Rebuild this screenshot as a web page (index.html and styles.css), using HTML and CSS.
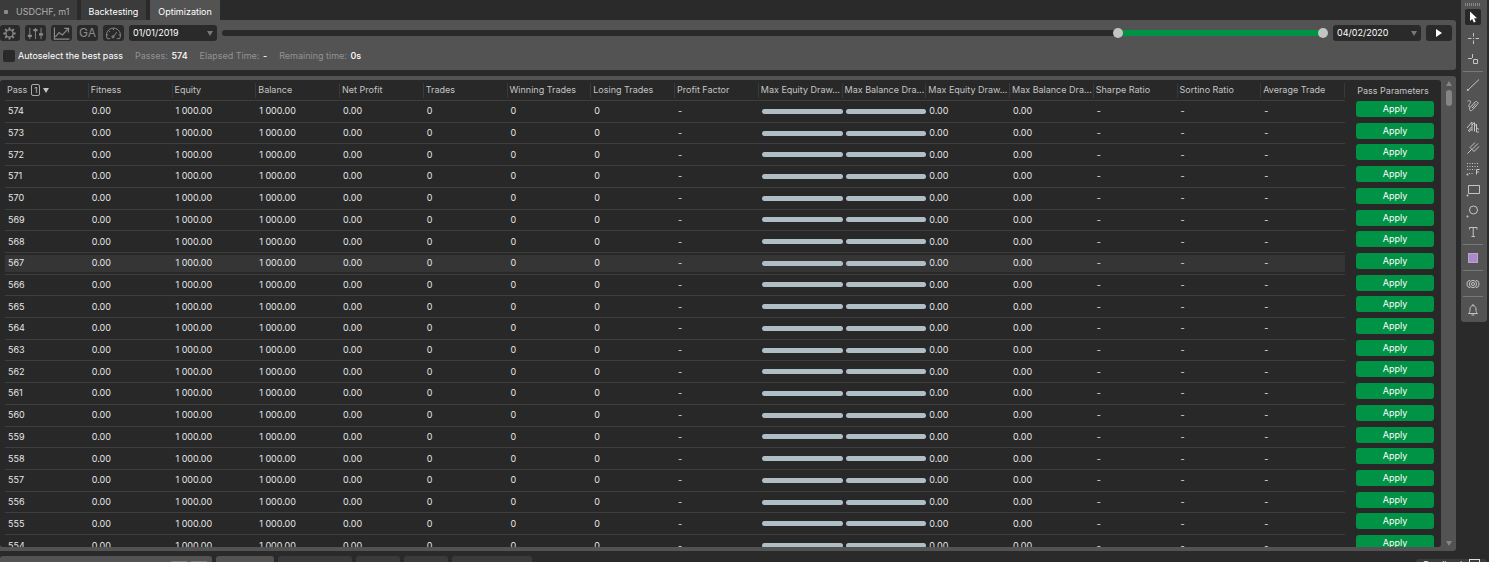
FILE: index.html
```
<!DOCTYPE html>
<html lang="en">
  <head>
    <meta charset="utf-8">
    <title>Optimization</title>
    <link rel="stylesheet" href="styles.css">
    <script>
      const FIRST_PASS = 574;
      const LAST_PASS = 554;
      const HOVERED_PASS = 567;
      const BAR = '<div class="bar"></div>';

      // one entry per column, after the pass number
      const values = [
        "0.00", "1 000.00", "1 000.00", "0.00", "0", "0", "0", "-",
        BAR, BAR, "0.00", "0.00", "-", "-", "-",
      ];

      window.onload = () => {
        const body = document.getElementById("passes");
        for (let pass = FIRST_PASS; pass >= LAST_PASS; pass--) {
          const row = document.createElement("tr");
          if (pass === HOVERED_PASS) row.className = "hovered";
          const cells = [pass, ...values].map((v) => `<td>${v}</td>`).join("");
          row.innerHTML = `${cells}<td class="action"><button class="apply">Apply</button></td>`;
          body.append(row);
        }
      };
    </script>
  </head>
  <body>
    <main>
      <nav class="tabs">
        <button class="tab chart"><i class="dot"></i>USDCHF, m1</button>
        <button class="tab">Backtesting</button>
        <button class="tab active">Optimization</button>
      </nav>

      <section class="panel settings">
        <div class="toolbar">
          <button class="tool first" aria-label="Settings">
            <svg viewBox="0 0 16 16"><circle cx="8" cy="8" r="3.8" stroke-width="1.400"/><path d="M8 1.500v2.500M8 12v2.500M1.500 8h2.500M12 8h2.500M3.400 3.400l1.700 1.700M10.900 10.900l1.700 1.700M3.400 12.600l1.700-1.700M10.900 5.100l1.700-1.700" stroke-width="2"/></svg>
          </button>
          <button class="tool" aria-label="Parameters">
            <svg viewBox="0 0 18 16"><path d="M3 2v12M9 2v12M15 2v12"/><path d="M.8 10.5h4.4M6.8 4.5h4.4M12.8 9h4.4" stroke-width="2.4"/></svg>
          </button>
          <button class="tool" aria-label="Chart">
            <svg viewBox="0 0 18 16"><path d="M1.5 1.500v12.500h16M2.500 11.500l4-4.500 3.500 2.500 6-6.500M12 2.500h4.500v4.500" stroke-width="1.300"/></svg>
          </button>
          <button class="tool" aria-label="Genetic algorithm">GA</button>
          <button class="tool" aria-label="Speed">
            <svg viewBox="0 0 18 16"><path d="M2.500 13.500A7.500 7.500 0 1 1 15.500 13.500M2.500 13.500h3M12.500 13.500h3M9 2.500v2M4 5l1.400 1.400M1.500 9.500h2M14.500 9.500h2M8 12.500l4.500-6"/><circle cx="8.500" cy="11.500" r="1.200"/></svg>
          </button>
          <span class="date"><select aria-label="From"><option>01/01/2019</option></select></span>
          <div class="range">
            <div class="range-fill"></div>
            <input type="range" min="0" max="1096" value="891" aria-label="Range start">
            <input type="range" min="0" max="1096" value="1096" aria-label="Range end">
          </div>
          <span class="date"><select aria-label="To"><option>04/02/2020</option></select></span>
          <button class="play" aria-label="Start">
            <svg viewBox="0 0 10 10"><path d="M2 1l6 4-6 4z"/></svg>
          </button>
        </div>
        <div class="status">
          <label class="autoselect"><input type="checkbox">Autoselect the best pass</label>
          <span>Passes: <b>574</b></span>
          <span>Elapsed Time: <b>-</b></span>
          <span>Remaining time: <b>0s</b></span>
        </div>
      </section>

      <section class="panel results">
        <div class="table-view">
          <table>
            <thead>
              <tr>
                <th><span class="sort">Pass <i>1</i></span></th>
                <th>Fitness</th>
                <th>Equity</th>
                <th>Balance</th>
                <th>Net Profit</th>
                <th>Trades</th>
                <th>Winning Trades</th>
                <th>Losing Trades</th>
                <th>Profit Factor</th>
                <th>Max Equity Draw...</th>
                <th>Max Balance Dra...</th>
                <th>Max Equity Draw...</th>
                <th>Max Balance Dra...</th>
                <th>Sharpe Ratio</th>
                <th>Sortino Ratio</th>
                <th>Average Trade</th>
                <th class="action">Pass Parameters</th>
              </tr>
            </thead>
            <tbody id="passes"></tbody>
          </table>
        </div>
        <div class="scrollbar">
          <i class="up"></i>
          <i class="thumb"></i>
          <i class="down"></i>
        </div>
      </section>

      <footer>
        <div class="dock wide"><i></i><i></i></div>
        <div class="dock current"></div>
        <div class="dock medium"></div>
        <div class="dock"></div>
        <div class="dock"></div>
        <div class="dock long"></div>
      </footer>
    </main>

    <aside>
      <div class="drawing">
        <div class="grip"></div>
        <button class="selected" aria-label="Pointer"><svg viewBox="0 0 16 16"><path class="solid" d="M5 2.500v9.500l2.200-2 1.600 3.600 1.900-.8-1.600-3.600h3z"/></svg></button>
        <button aria-label="Crosshair"><svg viewBox="0 0 16 16"><path d="M8.500 3v3.500M8.500 10.500v3.500M3 8.500h3.500M10.500 8.500h3.500M8 8.500h1"/></svg></button>
        <button aria-label="Data box"><svg viewBox="0 0 16 16"><path d="M3 7.500h4M7.500 3v4M8.500 8.500h4v4h-4z"/></svg></button>
        <hr>
        <button aria-label="Line"><svg viewBox="0 0 16 16"><path d="M3 13L14 2.500"/><circle class="solid" cx="2.800" cy="13" r="1"/></svg></button>
        <button aria-label="Freehand"><svg viewBox="0 0 16 16"><path d="M2.500 3c3-1 4 .5 2.500 2.500s-2 3.500 0 3.500M5 12.500c-1-1-.5-2.500.5-3.500l4.500-5c1.500-1.500 4 .5 2.500 2.300l-4.500 5c-1 1.200-2 1.700-3 1.200zM7 10l4-4.500"/></svg></button>
        <button aria-label="Waves"><svg viewBox="0 0 16 16"><path d="M2 9l5-6v9M3 12l3.500-4M7 6l2.500-2.500v9M9.500 7l2-2v8h2.500M4 13l2.500-3M12 9l2 1.500"/></svg></button>
        <button aria-label="Pitchfork"><svg viewBox="0 0 16 16"><path d="M2.500 13.500l4-4M5 7.500l4 4M5 7.500l5-5M7 9.500l6-6M9 11.500l5-5"/></svg></button>
        <button aria-label="Fibonacci"><svg viewBox="0 0 16 16"><path d="M2 2.500h12M2 5.500h12M2 8.500h8M4 12.500h5" stroke-dasharray="1 1.500"/><path d="M11.500 13.500v-5h3M11.500 11h2.500"/><circle class="solid" cx="2.500" cy="13.500" r="1"/></svg></button>
        <button aria-label="Rectangle"><svg viewBox="0 0 16 16"><path d="M3.500 3.500h11v8h-11z"/><circle class="solid" cx="2.500" cy="13.500" r="1"/></svg></button>
        <button aria-label="Ellipse"><svg viewBox="0 0 16 16"><circle cx="8.500" cy="7" r="4"/><circle class="solid" cx="2.500" cy="13.500" r="1"/></svg></button>
        <button aria-label="Text"><svg viewBox="0 0 16 16"><path d="M4.500 5.500v-2h7.500v2M8.200 3.500v9M6.500 12.500h3.500"/></svg></button>
        <hr>
        <button aria-label="Color"><i class="swatch"></i></button>
        <hr>
        <button aria-label="Screenshot"><svg viewBox="0 0 16 16"><circle cx="8" cy="8" r="3.600"/><circle cx="8" cy="8" r="1.500"/><path d="M5 4.500c-4-.5-4 7.500 0 7M11 4.500c4-.5 4 7.500 0 7"/></svg></button>
        <hr>
        <button aria-label="Alerts"><svg viewBox="0 0 16 16"><path d="M3.500 11.500c1.500-1 1.500-2.500 1.500-4.500 0-4.500 6-4.500 6 0 0 2 0 3.500 1.500 4.500zM6.500 13h3M8 2v1.500"/></svg></button>
      </div>
      <button class="feedback">Feedback <i></i></button>
    </aside>
  </body>
</html>
```
FILE: styles.css
```
* {
  box-sizing: border-box;
}
body {
  display: flex;
  gap: 5px;
  height: 100vh;
  margin: 0;
  padding-right: 2px;
  overflow: hidden;
  background: #2a2a2a;
  color: #e6e6e6;
  font: 9px/12px Inter, "Liberation Sans", sans-serif;
}
button,
select,
input {
  margin: 0;
  padding: 0;
  border: 0;
  font: inherit;
  color: inherit;
}
button {
  background: none;
}
svg {
  display: block;
  fill: none;
  stroke: currentColor;
}
main {
  display: flex;
  flex: 1;
  flex-direction: column;
  min-width: 0;
}

/* tabs */
.tabs {
  display: flex;
  gap: 4px;
  height: 20px;
}
.tab {
  display: flex;
  align-items: center;
  padding: 4px 8px 0;
  background: #3b3b3b;
  color: #fff;
}
.tab.chart {
  gap: 8px;
  padding: 4px 7px 0 4px;
  color: #b0b0b0;
}
.tab.active {
  background: #535353;
}
.dot {
  width: 4px;
  height: 4px;
  border-radius: 1px;
  background: #8a8a8a;
}

/* settings */
.panel {
  background: #535353;
}
.settings {
  display: flex;
  flex-direction: column;
  gap: 9px;
  margin-bottom: 6px;
  padding: 5px 4px 8px 0;
  border-radius: 0 3px 3px 0;
}
.toolbar {
  display: flex;
  align-items: center;
  gap: 5px;
}
.tool,
.play,
.date select {
  height: 16px;
  border-radius: 3px;
  background: #2a2a2a;
}
.tool {
  display: flex;
  align-items: center;
  justify-content: center;
  width: 21px;
  color: #8a8a8a;
  font-size: 12px;
}
.tool.first {
  width: 20px;
  padding-right: 2px;
}
.tool svg {
  height: 15px;
}
.date {
  position: relative;
}
.date select {
  display: block;
  width: 88px;
  padding-left: 4px;
  appearance: none;
  color: #fff;
}
.date::after {
  content: "";
  position: absolute;
  top: 6px;
  right: 4px;
  border: 3px solid transparent;
  border-top: 5px solid #777;
  border-bottom: 0;
}
.play {
  width: 26px;
  color: #fff;
}
.play svg {
  width: 10px;
  margin: auto;
  fill: currentColor;
  stroke: none;
}
.range {
  position: relative;
  flex: 1;
  height: 6px;
  border-radius: 3px;
  background: #2a2a2a;
}
.range-fill {
  height: 6px;
  margin-left: 81%;
  border-radius: 3px;
  background: #009245;
}
.range input {
  position: absolute;
  top: -2px;
  left: 0;
  width: 100%;
  height: 10px;
  appearance: none;
  background: none;
  pointer-events: none;
}
.range input::-webkit-slider-thumb {
  width: 10px;
  height: 10px;
  appearance: none;
  border-radius: 50%;
  background: #c4c4c4;
  pointer-events: auto;
}
.status {
  display: flex;
  align-items: center;
  gap: 12px;
  padding-left: 3px;
  color: #929292;
}
.status b {
  margin-left: 1px;
  color: #fff;
  font-weight: 500;
}
.autoselect {
  display: flex;
  align-items: center;
  gap: 3px;
  color: #fff;
}
.autoselect input {
  width: 12px;
  height: 12px;
  appearance: none;
  border-radius: 2px;
  background: #2a2a2a;
}

/* results */
.results {
  display: flex;
  flex: 1;
  min-height: 0;
  padding: 4px 0;
  border-radius: 0 3px 3px 0;
}
.table-view {
  flex: 1;
  padding-left: 5px;
  overflow: hidden;
  border-radius: 3px;
  background: #282828;
}
table {
  width: 100%;
  height: 477px;
  table-layout: fixed;
  border-collapse: separate;
  border-spacing: 0;
}
th,
td {
  padding: 0 0 0 3px;
  border-bottom: 1px solid #3e3e3e;
  white-space: nowrap;
}
th {
  height: 21px;
  padding-left: 2px;
  background: linear-gradient(#393939, #393939) right 3px / 1px 15px no-repeat;
  color: #c4c4c4;
  font-weight: 400;
  text-align: left;
}
th.action {
  width: 96px;
  padding: 0;
  background: none;
  text-align: center;
}
.action {
  border: 0;
}
td.action {
  padding: 0 7px 0 11px;
  vertical-align: top;
}
.apply {
  display: block;
  width: 100%;
  height: 16px;
  border-radius: 3px;
  background: #009245;
  color: #fff;
}
.bar {
  height: 5px;
  border-radius: 3px;
  background: #b0bec5;
}
.hovered td:not(.action) {
  background: linear-gradient(#353535, #353535) center / 100% 17px no-repeat;
}
.sort {
  display: flex;
  align-items: center;
  gap: 4px;
}
.sort i {
  width: 9px;
  border: 1px solid #aaa;
  border-radius: 2px;
  font-size: 8px;
  font-style: normal;
  line-height: 10px;
  text-align: center;
}
.sort::after {
  content: "";
  margin-left: -1px;
  border: 3px solid transparent;
  border-top: 5px solid #c4c4c4;
  border-bottom: 0;
}
.scrollbar {
  display: flex;
  flex-direction: column;
  align-items: center;
  gap: 4px;
  width: 15px;
  padding: 1px 0;
}
.up,
.down {
  border: 3px solid transparent;
  border-bottom: 5px solid #858585;
  border-top: 0;
}
.down {
  margin-top: auto;
  transform: rotate(180deg);
}
.thumb {
  width: 6px;
  height: 16px;
  border-radius: 3px;
  background: #858585;
}

/* docked windows */
footer {
  display: flex;
  gap: 4px;
  height: 11px;
  padding-top: 5px;
}
.dock {
  width: 44px;
  border-radius: 3px 3px 0 0;
  background: #3b3b3b;
}
.wide {
  display: flex;
  align-items: flex-end;
  justify-content: flex-end;
  gap: 4px;
  width: 212px;
  padding-right: 5px;
}
.wide i {
  width: 16px;
  height: 1px;
  background: #777;
}
.wide,
.current {
  background: #535353;
}
.current {
  width: 58px;
}
.medium {
  width: 74px;
}
.long {
  width: 80px;
}

/* drawing tools */
aside {
  display: flex;
  flex-direction: column;
  justify-content: space-between;
  align-items: flex-end;
  width: 26px;
}
.drawing {
  display: flex;
  flex-direction: column;
  width: 100%;
  padding: 3px 3px 2px 1px;
  border-radius: 0 0 3px 3px;
  background: #535353;
}
.grip {
  height: 3px;
  margin: 0 3px;
  background: repeating-linear-gradient(90deg, #888 0 1px, #535353 1px 2px);
}
.drawing button {
  display: flex;
  align-items: center;
  justify-content: center;
  height: 21px;
  color: #c4c4c4;
}
.drawing svg {
  width: 16px;
  height: 16px;
}
.solid {
  fill: currentColor;
  stroke: none;
}
.drawing .selected svg {
  border-radius: 2px;
  background: #282828;
  color: #fff;
}
.drawing hr {
  width: 20px;
  margin: 2px auto;
  border: 0;
  border-top: 1px solid #777;
}
.swatch {
  width: 10px;
  height: 10px;
  border: 1px solid #bba4d4;
  background: #a98bc9;
}
.feedback {
  display: flex;
  gap: 4px;
  height: 3px;
  padding: 0 7px;
  overflow: hidden;
  border-radius: 3px 3px 0 0;
  background: #3b3b3b;
  white-space: nowrap;
}
.feedback i {
  width: 11px;
  height: 11px;
  border: 1px solid #ddd;
}
```
